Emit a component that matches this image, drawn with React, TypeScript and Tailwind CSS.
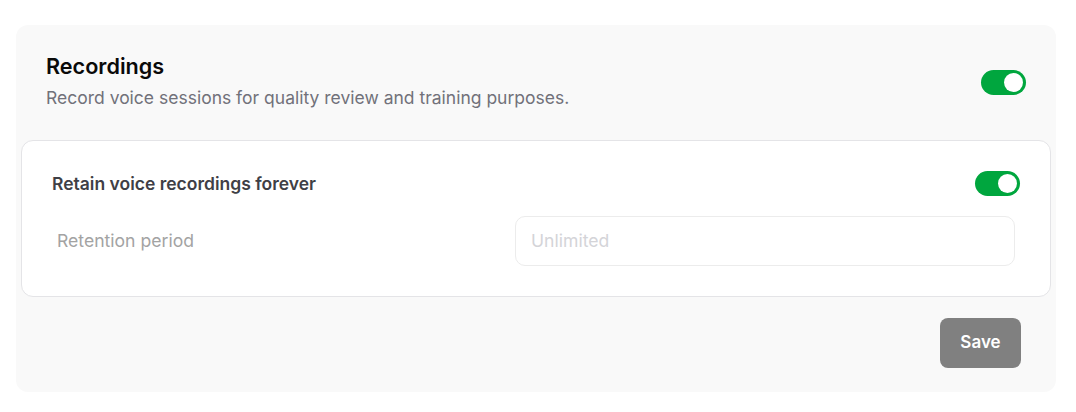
import React from "react";

function Toggle() {
  return (
    <div className="flex h-[25px] w-[45px] items-center justify-end rounded-full bg-[#00a63e] px-[3px]">
      <div className="h-[19px] w-[19px] rounded-full bg-white" />
    </div>
  );
}

export default function App() {
  return (
    <div className="min-h-[412px] bg-white pl-4 pr-5 pt-[25px] font-['Inter','Noto_Sans',sans-serif]">
      <div className="rounded-xl bg-[#f9f9f9] pt-[27px] pb-[24px]">
        <div className="flex items-center justify-between px-[30px]">
          <div className="flex flex-col gap-[6px]">
            <h2 className="text-[21.6px] leading-[28px] font-semibold text-[#0a0a0a]">Recordings</h2>
            <p className="text-[17.5px] leading-[24px] text-[#71717a]">
              Record voice sessions for quality review and training purposes.
            </p>
          </div>
          <div className="mt-[3px]">
            <Toggle />
          </div>
        </div>

        <div className="mx-[5px] mt-[30px] rounded-xl border border-[#e4e4e7] bg-white px-[30px] pt-[30px] pb-[30px]">
          <div className="flex h-[25px] items-center justify-between">
            <span className="text-[17.5px] leading-[24px] font-semibold text-[#3f3f46]">
              Retain voice recordings forever
            </span>
            <Toggle />
          </div>
          <div className="mt-[20px] flex items-center justify-between px-[5px]">
            <span className="text-[17.6px] leading-[24px] text-[#a3a3a3]">Retention period</span>
            <div className="flex h-[50px] w-[500px] items-center rounded-[10px] border border-[#ececec] bg-white px-[15px]">
              <span className="text-[17.6px] leading-[24px] text-[#d4d4d8]">Unlimited</span>
            </div>
          </div>
        </div>

        <div className="mt-[21px] flex justify-end pr-[35px]">
          <button className="flex h-[50px] w-[81px] items-center justify-center rounded-lg bg-[#808080] text-[17px] font-semibold text-white">
            Save
          </button>
        </div>
      </div>
    </div>
  );
}
